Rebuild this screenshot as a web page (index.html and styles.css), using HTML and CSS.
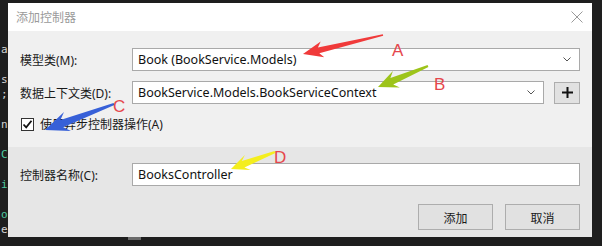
FILE: index.html
```html
<!DOCTYPE html>
<html lang="zh-CN">
<head>
  <meta charset="UTF-8" />
  <title>添加控制器</title>
  <link rel="stylesheet" href="styles.css">
</head>
<body>
  <div class="screen">
    <!-- editor behind the dialog -->
    <div class="code-strip">
      <span class="ln">a</span>
      <span class="ln"></span>
      <span class="ln">s</span>
      <span class="ln semi">;</span>
      <span class="ln"></span>
      <span class="ln">n</span>
      <span class="ln"></span>
      <span class="ln type">C</span>
      <span class="ln"></span>
      <span class="ln type">i</span>
      <span class="ln"></span>
      <span class="ln type">o</span>
      <span class="ln">e</span>
    </div>

    <div class="dialog">
      <div class="titlebar">
        <span class="title">添加控制器</span>
        <svg class="close" width="12" height="12" viewBox="0 0 12 12">
          <path d="M0.5 0.5 L11.5 11.5 M11.5 0.5 L0.5 11.5" stroke="#9a9a9a" stroke-width="1" fill="none"/>
        </svg>
      </div>

      <div class="main">
        <div class="row">
          <label class="lbl">模型类(M):</label>
          <div class="combo">
            <span>Book (BookService.Models)</span>
            <svg class="chev" width="8" height="5" viewBox="0 0 8 5"><path d="M0.5 0.5 L4 4 L7.5 0.5" stroke="#555" fill="none"/></svg>
          </div>
        </div>
        <div class="row">
          <label class="lbl">数据上下文类(D):</label>
          <div class="combo">
            <span>BookService.Models.BookServiceContext</span>
            <svg class="chev" width="8" height="5" viewBox="0 0 8 5"><path d="M0.5 0.5 L4 4 L7.5 0.5" stroke="#555" fill="none"/></svg>
          </div>
          <button class="plus">
            <svg width="11" height="11" viewBox="0 0 11 11"><path d="M5.5 0 V11 M0 5.5 H11" stroke="#111" stroke-width="2"/></svg>
          </button>
        </div>
        <div class="check-row">
          <span class="checkbox">
            <svg width="11" height="11" viewBox="0 0 11 11"><path d="M1.5 5.5 L4.2 8.3 L9.5 1.8" stroke="#111" stroke-width="1.8" fill="none"/></svg>
          </span>
          <span>使用异步控制器操作(A)</span>
        </div>
      </div>

      <div class="footer">
        <div class="row">
          <label class="lbl">控制器名称(C):</label>
          <div class="textbox">BooksController</div>
        </div>
        <div class="actions">
          <button class="btn">添加</button>
          <button class="btn">取消</button>
        </div>
      </div>
    </div>

    <div class="right-strip"></div>
    <div class="grip"></div>

    <!-- screenshot annotations drawn over the dialog -->
    <svg class="marks" width="602" height="246" viewBox="0 0 602 246">
      <polygon fill="#f03a3a" points="382.8,34.2 317.9,47.4 320.7,41.6 303,54 324.3,57.2 319.3,53.2 383.2,35.8"/>
      <polygon fill="#9dc41a" points="427.6,65.1 390.4,78 392.9,71 378,87 399.9,87.6 393.2,84.4 428.4,66.9"/>
      <polygon fill="#3760d8" points="113.6,103.1 60.4,119.9 64,112.1 45,130 71,130.9 63.2,127.3 114.4,104.9"/>
      <polygon fill="#f4ee1e" points="274.6,151.1 241.8,161 244.9,155 231,169 250.7,170 244.4,167.6 275.4,152.9"/>
      <text x="392" y="56" class="mark-letter">A</text>
      <text x="434" y="90" class="mark-letter">B</text>
      <text x="113" y="112" class="mark-letter">C</text>
      <text x="274" y="163" class="mark-letter">D</text>
    </svg>
  </div>
</body>
</html>
```

FILE: styles.css
```css
body {
  margin: 0;
  background: #1e1e1e;
  font-family: "Noto Sans", "Noto Sans CJK SC", sans-serif;
  font-size: 12px;
  color: #1a1a1a;
}
.screen {
  position: relative;
  width: 602px;
  height: 246px;
  display: flex;
  align-items: flex-start;
  overflow: hidden;
}
.code-strip {
  width: 8px;
  padding-top: 42px;
  display: flex;
  flex-direction: column;
  font-family: "DejaVu Sans Mono", monospace;
  font-size: 11px;
  color: #d4d4d4;
}
.ln {
  height: 15px;
  line-height: 15px;
  padding-left: 1px;
}
.ln.type {
  color: #4ec9a0;
}
.dialog {
  margin-top: 3px;
  width: 584px;
  height: 234px;
  display: flex;
  flex-direction: column;
  background: #f0f0f0;
}
.right-strip {
  flex: 1;
  height: 246px;
  background: #1e1e1e;
}
.grip {
  position: absolute;
  left: 128px;
  top: 237px;
  width: 13px;
  height: 3px;
  background: #6a6a6a;
}
.titlebar {
  height: 28px;
  background: #fff;
  display: flex;
  align-items: center;
  justify-content: space-between;
  padding: 0 9px 0 8px;
}
.title {
  color: #9a9a9a;
  font-size: 12px;
}
.main {
  height: 116px;
  box-sizing: border-box;
  padding: 17px 12px 0 12px;
  display: flex;
  flex-direction: column;
  gap: 10px;
}
.row {
  display: flex;
  align-items: center;
}
.lbl {
  width: 112px;
  flex-shrink: 0;
}
.combo, .textbox {
  flex: 1;
  height: 23px;
  box-sizing: border-box;
  background: #fff;
  border: 1px solid #a9a9a9;
  padding: 0 8px 0 5px;
  display: flex;
  align-items: center;
  justify-content: space-between;
  font-size: 12.5px;
  color: #111;
}
.plus {
  width: 26px;
  height: 22px;
  margin-left: 10px;
  border: 1px solid #adadad;
  background: #e1e1e1;
  padding: 0;
  display: flex;
  align-items: center;
  justify-content: center;
}
.check-row {
  margin-top: 1px;
  display: flex;
  align-items: center;
  gap: 6px;
  padding-left: 1px;
}
.checkbox {
  width: 13px;
  height: 13px;
  box-sizing: border-box;
  border: 1px solid #333;
  background: #fff;
  display: flex;
  align-items: center;
  justify-content: center;
}
.footer {
  flex: 1;
  background: #e6e6e6;
  padding: 16px 12px 0 12px;
  display: flex;
  flex-direction: column;
  gap: 18px;
}
.actions {
  display: flex;
  justify-content: flex-end;
  gap: 12px;
}
.btn {
  width: 75px;
  height: 26px;
  border: 1px solid #adadad;
  background: #e1e1e1;
  font-family: "Noto Sans CJK SC", sans-serif;
  font-size: 12px;
  color: #1a1a1a;
  padding: 0;
}
.marks {
  position: absolute;
  left: 0;
  top: 0;
  pointer-events: none;
}
.mark-letter {
  font-family: "Liberation Sans", sans-serif;
  font-size: 17px;
  fill: #e5464c;
}
```
